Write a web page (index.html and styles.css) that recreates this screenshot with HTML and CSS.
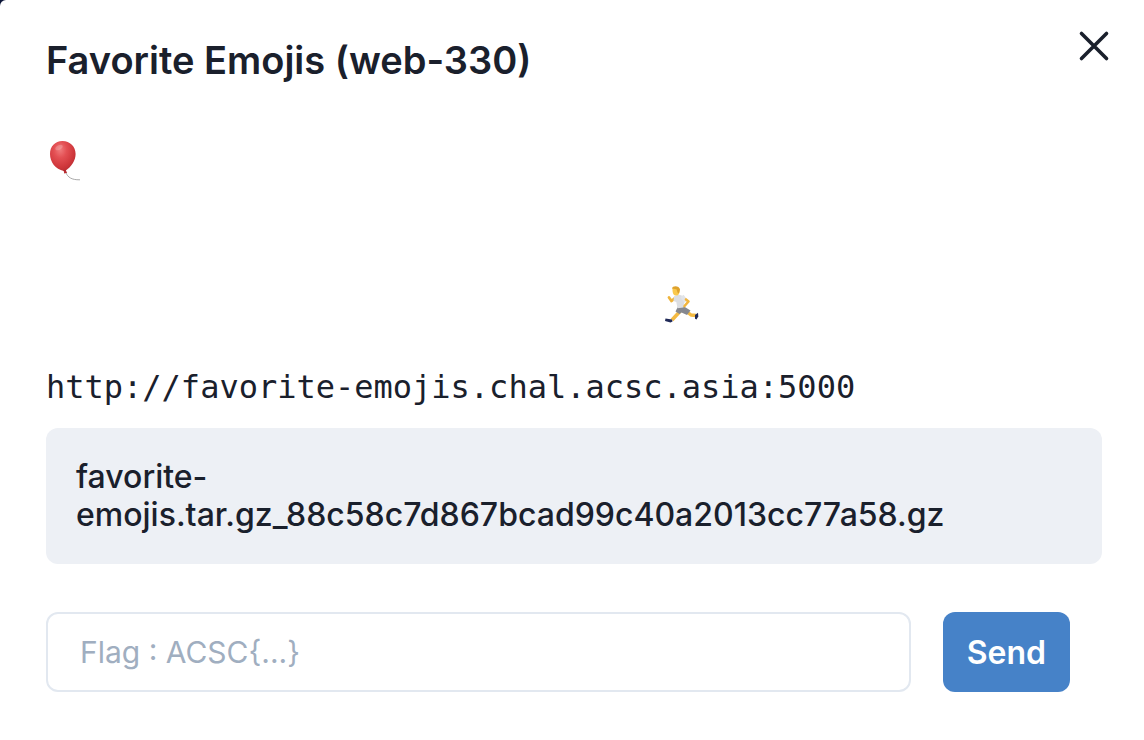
FILE: index.html
```html
<!DOCTYPE html>
<html lang="en">
<head>
<meta charset="utf-8">
<title>Favorite Emojis (web-330)</title>
<link rel="stylesheet" href="styles.css">
</head>
<body>
<main class="modal">
  <header class="modal-header">
    <h1 class="title">Favorite Emojis (web-330)</h1>
    <button class="close" type="button" aria-label="Close">
      <svg width="32" height="32" viewBox="0 0 32 32" fill="none" stroke="currentColor" stroke-width="3.6" stroke-linecap="round"><path d="M3.5 3.500 28.500 28.500M28.500 3.500 3.500 28.500"/></svg>
    </button>
  </header>
  <div class="scene">
    <svg class="balloon" role="img" aria-label="Balloon" width="36" height="44" viewBox="0 0 36 44">
      <defs>
        <radialGradient id="red" cx="40%" cy="27%" r="72%">
          <stop offset="0" stop-color="#f07a7b"/>
          <stop offset=".35" stop-color="#e34f53"/>
          <stop offset=".75" stop-color="#cf373b"/>
          <stop offset="1" stop-color="#b72c31"/>
        </radialGradient>
      </defs>
      <path d="M20 33c2 4 5 7 14 6.800" fill="none" stroke="#a9a9a9" stroke-width="1"/>
      <path d="M16.500 1C24 1 29.600 6.500 29.600 14c0 7-4.600 13-9.800 16.500l1.400 2.300-3 .600-.400-2.500C9.500 29.500 4 22 4 14 4 6.500 9 1 16.500 1Z" fill="url(#red)"/>
      <path d="M17.600 30.600l2.200-.200" stroke="#a8262b" stroke-width="1"/>
      <ellipse cx="13" cy="7.500" rx="4" ry="2.200" transform="rotate(-28 13 7.500)" fill="#fff" opacity=".2"/>
    </svg>
    <svg class="runner" role="img" aria-label="Runner" width="36" height="40" viewBox="0 0 36 40">
      <path d="M11 13 7.500 16 5 12.500" fill="none" stroke="#efb43c" stroke-width="2.800" stroke-linecap="round" stroke-linejoin="round"/>
      <path d="M17 25 14 28.500 8 35" fill="none" stroke="#f4ba42" stroke-width="3.600" stroke-linejoin="round"/>
      <path d="M20 24.500 27 30 32 30.500" fill="none" stroke="#f4ba42" stroke-width="3.400" stroke-linejoin="round"/>
      <path d="M1.500 33.500 8 34.500 8.500 36.500 6.500 37.500 1 36Z" fill="#202a58"/>
      <path d="M31 30 34 27.800 34.300 31.500 32.500 34.500 31 33.800Z" fill="#202a58"/>
      <path d="M14 21.500 20 21.500 26.500 25.500 23 30 17.500 27.500 15.500 29 11.500 26.500Z" fill="#86888f"/>
      <path d="M10 11.500 14.500 9.500 19 11 20.500 16 19.500 22.500 13.500 23.300 12.300 17 9.500 16Z" fill="#dcdee2"/>
      <path d="M18 11 22 16.500" stroke="#e2e4e8" stroke-width="4"/>
      <path d="M22 14.500 24.500 16.500 20.500 21" fill="none" stroke="#f2b53d" stroke-width="2.600" stroke-linecap="round" stroke-linejoin="round"/>
      <path d="M8.500 3.500C9 1.500 14.500 1 15.500 4c.600 2.500-.500 6-2.500 6.500-3 .500-4.700-1.500-4.500-7Z" fill="#fac84b"/>
      <path d="M8 3.500C8.500 0 15.500.500 16 4.500l-1 4-1.500-1-1-3.300Z" fill="#dea22c"/>
    </svg>
  </div>
  <p class="url">http://favorite-emojis.chal.acsc.asia:5000</p>
  <a class="file" href="#">favorite-emojis.tar.gz_88c58c7d867bcad99c40a2013cc77a58.gz</a>
  <form class="flag-form">
    <input class="flag" type="text" aria-label="Flag" placeholder="Flag : ACSC{...}">
    <button class="send" type="button">Send</button>
  </form>
</main>
</body>
</html>
```

FILE: styles.css
```css
* { box-sizing: border-box; }

body {
  margin: 0;
  background: #0b1437;
  color: #1a202c;
  font-family: Inter, "Liberation Sans", sans-serif;
  font-size: 32px;
}

.modal {
  min-height: 100vh;
  padding: 30px 42px 48px 46px;
  background: #fff;
  border-top-left-radius: 6px;
}

.modal-header {
  display: flex;
  justify-content: space-between;
  align-items: flex-start;
}

.title {
  margin: 0;
  font-size: 38px;
  line-height: 60px;
  font-weight: 600;
}

.close {
  display: flex;
  margin-right: -8px;
  padding: 0;
  border: 0;
  background: none;
  color: #1a202c;
}

.scene {
  display: flex;
  flex-direction: column;
  justify-content: space-between;
  height: 185px;
  margin-top: 50px;
}

.balloon { display: block; }

.runner {
  display: block;
  margin-left: 618px;
}

.url {
  margin: 38px 0 0;
  font-family: "DejaVu Sans Mono", monospace;
  line-height: 48px;
}

.file {
  display: block;
  margin-top: 17px;
  padding: 30px;
  border-radius: 12px;
  background: #edf0f5;
  color: inherit;
  font-weight: 500;
  line-height: 38px;
  text-decoration: none;
}

.flag-form {
  display: flex;
  gap: 32px;
  margin: 48px 32px 0 0;
}

.flag {
  flex: 1;
  min-width: 0;
  height: 80px;
  padding: 0 32px;
  border: 2px solid #e2e8f0;
  border-radius: 12px;
  background: #fff;
  color: #1a202c;
  font: inherit;
  font-size: 30px;
}

.flag::placeholder { color: #a0aec0; opacity: 1; }

.send {
  height: 80px;
  padding: 0 24px;
  border: 0;
  border-radius: 12px;
  background: #4682c8;
  color: #fff;
  font: inherit;
  font-weight: 600;
}
```
